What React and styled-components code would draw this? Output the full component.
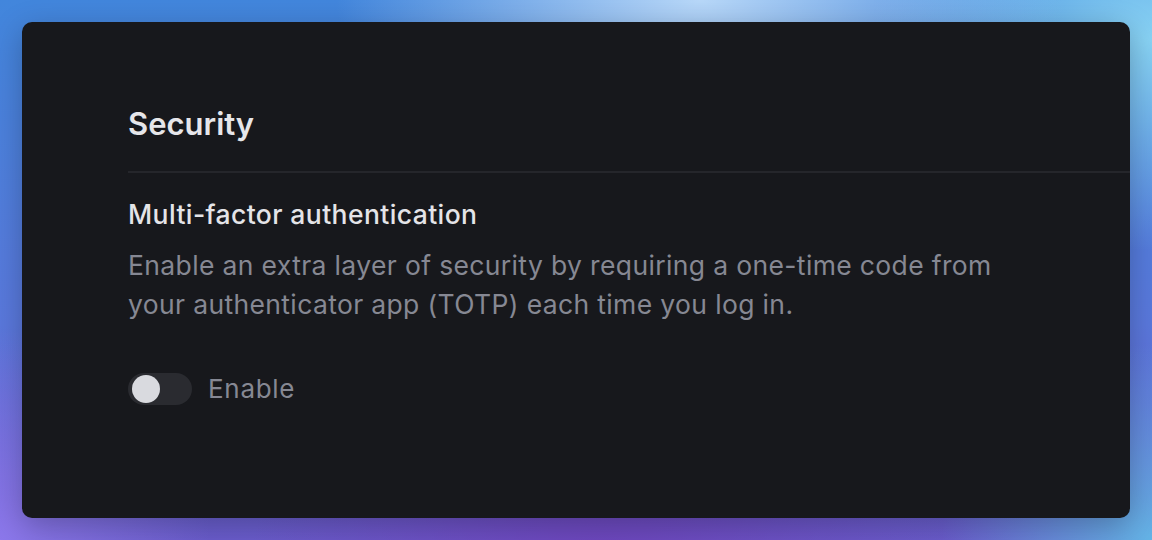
import React, { useState } from "react";
import styled, { createGlobalStyle } from "styled-components";

const Global = createGlobalStyle`
  html, body { margin: 0; padding: 0; }
  body {
    width: 1152px;
    height: 540px;
    overflow: hidden;
    font-family: Inter, "Noto Sans", sans-serif;
    -webkit-font-smoothing: antialiased;
  }
`;

const Backdrop = styled.div`
  width: 1152px;
  height: 540px;
  box-sizing: border-box;
  padding: 22px;
  background:
    radial-gradient(ellipse 520px 260px at 700px 0px, rgba(190, 220, 250, 0.95), rgba(190,220,250,0) 70%),
    radial-gradient(ellipse 400px 300px at 1152px 40px, rgba(140, 215, 245, 0.95), rgba(140,215,245,0) 70%),
    radial-gradient(ellipse 500px 300px at 600px 560px, rgba(110, 70, 190, 1), rgba(110,70,190,0) 70%),
    radial-gradient(ellipse 300px 300px at 0px 540px, rgba(140, 120, 235, 1), rgba(140,120,235,0) 70%),
    radial-gradient(ellipse 300px 280px at 1152px 540px, rgba(100, 180, 230, 1), rgba(100,180,230,0) 70%),
    linear-gradient(180deg, #4286dc 0%, #5a78dc 60%, #6a5ccc 100%);
`;

const Panel = styled.section`
  height: 100%;
  box-sizing: border-box;
  background: #17181c;
  border-radius: 10px;
  box-shadow: 0 8px 30px rgba(0, 0, 0, 0.25);
  padding: 82px 0 0 106px;
  display: flex;
  flex-direction: column;
`;

const Title = styled.h1`
  margin: 0;
  font-size: 31px;
  line-height: 40px;
  font-weight: 600;
  color: #e6e6ea;
`;

const Divider = styled.hr`
  margin: 27px 0 0 0;
  border: none;
  height: 2px;
  background: #25262b;
`;

const Setting = styled.div`
  display: flex;
  flex-direction: column;
  padding-top: 23px;
`;

const SettingName = styled.h2`
  margin: 0;
  font-size: 26.5px;
  line-height: 36px;
  font-weight: 500;
  letter-spacing: 0.4px;
  color: #e4e4e8;
`;

const Description = styled.p`
  margin: 14px 0 0 0;
  max-width: 910px;
  font-size: 26.5px;
  line-height: 39px;
  letter-spacing: 0.36px;
  color: #868893;
`;

const ToggleRow = styled.label`
  display: flex;
  align-items: center;
  gap: 16px;
  margin-top: 49px;
  cursor: pointer;
`;

const Track = styled.button`
  position: relative;
  width: 64px;
  height: 32px;
  padding: 0;
  border: none;
  border-radius: 16px;
  background: ${(p) => (p.$on ? "#4f7cf0" : "#2a2b30")};
  cursor: pointer;
  flex-shrink: 0;
`;

const Knob = styled.span`
  position: absolute;
  top: 2px;
  left: ${(p) => (p.$on ? "32px" : "4px")};
  width: 28px;
  height: 28px;
  border-radius: 50%;
  background: #d9dadf;
  transition: left 0.15s;
`;

const ToggleLabel = styled.span`
  font-size: 26px;
  line-height: 32px;
  letter-spacing: 0.7px;
  color: #868893;
`;

export default function App() {
  const [on, setOn] = useState(false);
  return (
    <>
      <Global />
      <Backdrop>
        <Panel>
          <Title>Security</Title>
          <Divider />
          <Setting>
            <SettingName>Multi-factor authentication</SettingName>
            <Description>
              Enable an extra layer of security by requiring a one-time code from
              your authenticator app (TOTP) each time you log in.
            </Description>
            <ToggleRow>
              <Track type="button" $on={on} onClick={() => setOn(!on)}>
                <Knob $on={on} />
              </Track>
              <ToggleLabel>Enable</ToggleLabel>
            </ToggleRow>
          </Setting>
        </Panel>
      </Backdrop>
    </>
  );
}
